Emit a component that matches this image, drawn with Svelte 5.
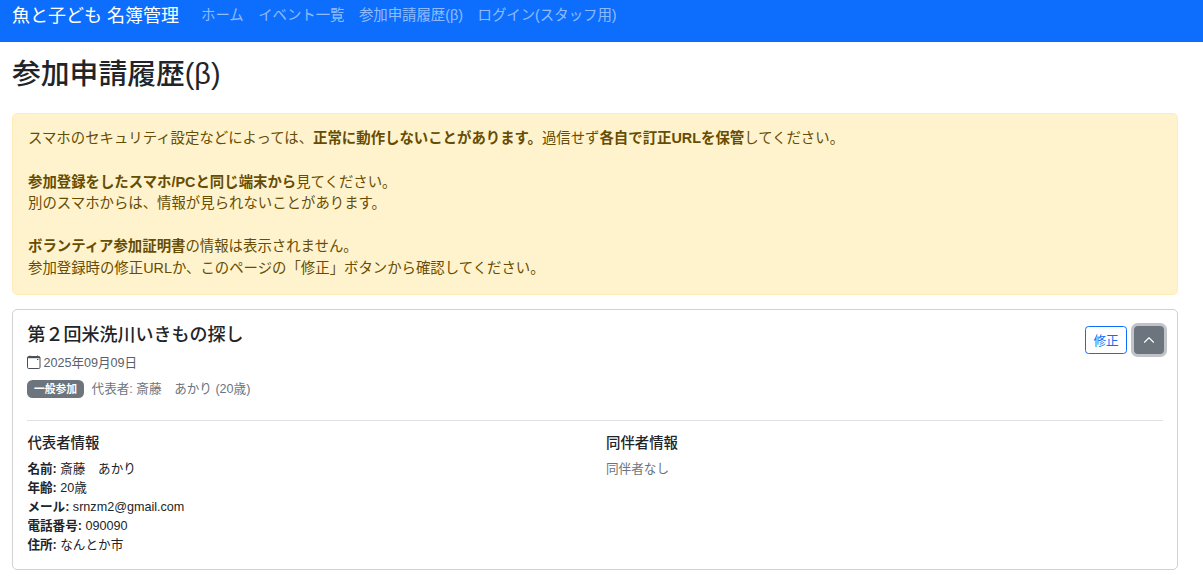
<script>
  const leader = [
    ['名前:', '斎藤　あかり'],
    ['年齢:', '20歳'],
    ['メール:', 'srnzm2@gmail.com'],
    ['電話番号:', '090090'],
    ['住所:', 'なんとか市']
  ];
</script>

<nav class="navbar">
  <span class="brand">魚と子ども 名簿管理</span>
  <div class="links">
    <span>ホーム</span>
    <span>イベント一覧</span>
    <span>参加申請履歴(β)</span>
    <span>ログイン(スタッフ用)</span>
  </div>
</nav>

<main class="page">
  <h1>参加申請履歴(β)</h1>

  <div class="alert">
    <p>スマホのセキュリティ設定などによっては、<strong>正常に動作しないことがあります。</strong>過信せず<strong>各自で訂正URLを保管</strong>してください。</p>
    <p><strong>参加登録をしたスマホ/PCと同じ端末から</strong>見てください。<br />別のスマホからは、情報が見られないことがあります。</p>
    <p><strong>ボランティア参加証明書</strong>の情報は表示されません。<br />参加登録時の修正URLか、このページの「修正」ボタンから確認してください。</p>
  </div>

  <section class="card">
    <div class="head">
      <div>
        <h2>第２回米洗川いきもの探し</h2>
        <div class="date">
          <svg width="14" height="14" viewBox="0 0 14 14" fill="none" stroke="currentColor" stroke-width="1" aria-hidden="true">
            <rect x="0.5" y="1.5" width="12.5" height="12" rx="1.2" />
            <path d="M0.5 2.5h12.5" stroke-width="1.4" />
            <path d="M3 0.5v1M10.5 0.5v1M10 4.5h1.4" />
          </svg>
          <span>2025年09月09日</span>
        </div>
        <div class="meta">
          <span class="badge">一般参加</span>
          <span class="rep">代表者: 斎藤　あかり (20歳)</span>
        </div>
      </div>
      <div class="actions">
        <button class="edit">修正</button>
        <button class="toggle" aria-label="閉じる">
          <svg width="12" height="12" viewBox="0 0 16 16" fill="none" stroke="currentColor" stroke-width="1.5" stroke-linecap="round" stroke-linejoin="round">
            <path d="M2 11l6-6 6 6" />
          </svg>
        </button>
      </div>
    </div>

    <hr />

    <div class="details">
      <div>
        <h3>代表者情報</h3>
        {#each leader as [k, v]}
          <div class="row"><strong>{k}</strong> {v}</div>
        {/each}
      </div>
      <div>
        <h3>同伴者情報</h3>
        <div class="row muted">同伴者なし</div>
      </div>
    </div>
  </section>
</main>

<style>
  :global(body) {
    margin: 0;
    background: #fff;
    color: #212529;
    font-family: "Liberation Sans", "Noto Sans CJK JP", sans-serif;
    font-size: 14.4px;
    line-height: 1.5;
  }

  .navbar {
    display: flex;
    align-items: flex-start;
    height: 42px;
    padding: 0 12px;
    background: #0d6efd;
    box-sizing: border-box;
  }

  .brand {
    font-size: 18px;
    line-height: 27px;
    padding-top: 3px;
    margin-right: 14px;
    color: #fff;
  }

  .links {
    display: flex;
    gap: 14.4px;
    padding-top: 4.5px;
    padding-left: 8px;
    line-height: 21.6px;
    color: rgba(255, 255, 255, 0.55);
  }

  .page {
    padding: 0 25px 0 12px;
  }

  h1 {
    margin: 0;
    padding-top: 15px;
    height: 71px;
    box-sizing: border-box;
    font-size: 28.8px;
    font-weight: 500;
    line-height: 1.2;
  }

  .alert {
    padding: 14.4px 15px;
    background: #fff3cd;
    border: 1px solid #ffecb5;
    border-radius: 5px;
    color: #664d03;
    margin-bottom: 14.4px;
  }

  .alert p {
    margin: 0 0 21.6px;
  }

  .alert p:last-child {
    margin: 0;
  }

  strong {
    font-weight: 700;
  }

  .card {
    padding: 14.4px;
    border: 1px solid rgba(0, 0, 0, 0.175);
    border-radius: 5px;
  }

  .head {
    display: flex;
    justify-content: space-between;
    align-items: flex-start;
  }

  h2 {
    margin: 0 0 7.2px;
    font-size: 18px;
    font-weight: 500;
    line-height: 21.6px;
  }

  .date {
    display: flex;
    align-items: center;
    gap: 2px;
    margin-bottom: 7.2px;
    font-size: 12.6px;
    line-height: 18.9px;
    color: #596168;
  }

  .date svg {
    color: #495057;
    margin-top: -2px;
  }

  .meta {
    display: flex;
    align-items: center;
    gap: 8px;
    font-size: 12.6px;
    line-height: 18.9px;
  }

  .badge {
    padding: 2.5px 6.5px;
    background: #6c757d;
    color: #fff;
    font-size: 10.8px;
    font-weight: 700;
    line-height: 13px;
    border-radius: 5.5px;
  }

  .rep {
    color: #6c757d;
  }

  .actions {
    display: flex;
    gap: 6.5px;
    align-items: center;
    padding-top: 1px;
  }

  button {
    font-family: inherit;
    cursor: pointer;
    box-sizing: border-box;
  }

  .edit {
    width: 42px;
    height: 28px;
    padding: 0;
    background: #fff;
    border: 1px solid #0d6efd;
    border-radius: 3.6px;
    color: #0d6efd;
    font-size: 12.6px;
  }

  .toggle {
    display: flex;
    align-items: center;
    justify-content: center;
    width: 30px;
    height: 28px;
    padding: 0;
    background: #6c757d;
    border: 1px solid #6c757d;
    border-radius: 3.6px;
    color: #fff;
    box-shadow: 0 0 0 3px rgba(130, 138, 145, 0.5);
    margin-right: -1px;
  }

  hr {
    margin: 21.6px 0 13.4px;
    border: 0;
    border-top: 1px solid #dee2e6;
  }

  .details {
    display: grid;
    grid-template-columns: 1fr 1fr;
    column-gap: 22px;
  }

  h3 {
    margin: 0 0 8.2px;
    font-size: 14.4px;
    font-weight: 500;
    line-height: 17.3px;
  }

  .row {
    font-size: 12.6px;
    line-height: 18.9px;
  }

  .muted {
    color: #6c757d;
  }
</style>
